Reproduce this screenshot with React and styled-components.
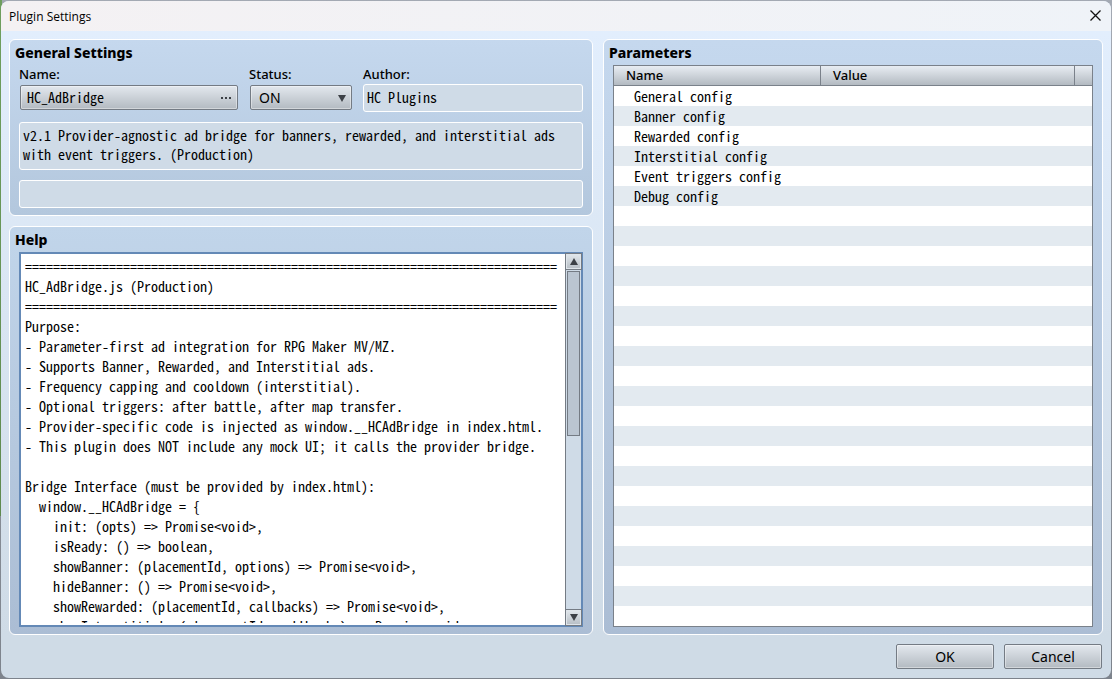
import React, { useRef } from "react";
import styled, { createGlobalStyle } from "styled-components";

const UI = `"Noto Sans", "Open Sans", sans-serif`;
const MONO = `"Noto Sans Mono CJK JP", "Liberation Mono", monospace`;

const GlobalStyle = createGlobalStyle`
  * {
    box-sizing: border-box;
  }

  body {
    margin: 0;
    background: linear-gradient(#a3a9b3, #7d838c);
    font-family: ${UI};
    font-size: 13px;
    color: #000;
  }
`;

const Desktop = styled.div`
  display: flex;
  min-height: 100vh;
  padding: 1px;
  background: linear-gradient(#6f9f5f, #5f8a50 76%, transparent 76%) left / 2px 100% no-repeat;
`;

const Window = styled.div`
  flex: 1;
  display: flex;
  flex-direction: column;
  border-radius: 8px;
  overflow: hidden;
  background: linear-gradient(#e3effe, #cfdbe6 94%);
`;

const TitleBar = styled.header`
  display: flex;
  align-items: center;
  justify-content: space-between;
  height: 30px;
  padding: 0 8px;
  background: linear-gradient(90deg, #f4f1f3, #eff3f8);
  font-family: "Open Sans", sans-serif;
  font-size: 12px;
`;

const CloseButton = styled.button`
  display: flex;
  padding: 0 2px 2px;
  border: none;
  background: none;
`;

const Body = styled.main`
  flex: 1;
  display: grid;
  grid-template-columns: 584fr 500fr;
  gap: 10px;
  padding: 8px 8px 9px;
`;

const Column = styled.div`
  display: flex;
  flex-direction: column;
  gap: 10px;
  min-width: 0;
`;

const Panel = styled.section`
  display: flex;
  flex-direction: column;
  flex: ${props => (props.$grow ? 1 : "none")};
  padding: 0 9px 7px;
  border: 1px solid #fff;
  border-radius: 6px;
  background: ${props => props.$fill};

  h2 {
    margin: 0 0 0 -4px;
    font-size: 14px;
    font-weight: 800;
    line-height: 25px;
  }
`;

const FieldRow = styled.div`
  display: grid;
  grid-template-columns: 220fr 104fr 220fr;
  gap: 10px;
  margin-bottom: 10px;
`;

const Field = styled.div`
  display: flex;
  flex-direction: column;

  label {
    font-size: 13px;
    font-weight: 500;
    line-height: 19px;
  }
`;

const Control = styled.div`
  display: flex;
  position: relative;
  height: 28px;
  padding: 1px;

  svg {
    position: absolute;
    right: 7px;
    top: 11px;
    pointer-events: none;
  }
`;

const raised = `
  border: 1px solid #747b84;
  border-radius: 2px;
  background: linear-gradient(#e3e8ee, #b3bac1);
  box-shadow: inset 0 0 0 1px rgba(255, 255, 255, 0.4);
  color: #000;
`;

const NameButton = styled.button`
  ${raised}
  flex: 1;
  height: 25px;
  padding: 0 6px 2px;
  text-align: left;
  font-family: ${MONO};
  font-size: 14px;
  line-height: 20px;
`;

const StatusSelect = styled.select`
  ${raised}
  appearance: none;
  flex: 1;
  height: 25px;
  padding: 0 8px;
  font-family: ${UI};
  font-size: 14px;
`;

const readonlyBox = `
  width: 100%;
  border: 1px solid #fff;
  border-radius: 3px;
  background: #cfdbe7;
  font-family: ${MONO};
  font-size: 14px;
  color: #000;
  outline: none;
`;

const TextBox = styled.input`
  ${readonlyBox}
  height: 28px;
  padding: 0 3px 2px;
`;

const Description = styled.textarea`
  ${readonlyBox}
  display: block;
  height: 48px;
  margin-bottom: 10px;
  padding: 3px;
  line-height: 19px;
  resize: none;
  overflow: hidden;
`;

const HelpBox = styled.div`
  flex: 1;
  display: flex;
  min-height: 0;
  border: 2px solid #6489b6;
  background: #fff;
`;

const HelpText = styled.pre`
  flex: 1 1 0;
  height: 0;
  min-height: 100%;
  min-width: 0;
  margin: 0;
  border: solid #fff;
  border-width: 2px 0 2px 4px;
  overflow: hidden;
  font-family: ${MONO};
  font-size: 14px;
  line-height: 20px;
`;

const ScrollBar = styled.div`
  display: flex;
  flex-direction: column;
  width: 16px;
  border-left: 1px solid #747b84;
  background: #cfdbe7;
`;

const ScrollButton = styled.button`
  display: flex;
  align-items: center;
  justify-content: center;
  height: 15px;
  padding: 0;
  border: 1px solid #dfe5ea;
  background: linear-gradient(#dfe5ea, #b9c0c7);
  box-shadow: 0 0 0 1px #747b84;
`;

const Track = styled.div`
  flex: 1;
  padding: 2px 1px;
`;

const Thumb = styled.div`
  height: 49%;
  border: 1px solid #747b84;
  background: #bac5d1;
`;

const TableFrame = styled.div`
  flex: 1;
  border: 1px solid #7a818a;
  background: repeating-linear-gradient(#e3eaf0 0 20px, #fff 20px 40px);
`;

const ParamTable = styled.table`
  width: 100%;
  border-spacing: 0;
  table-layout: fixed;

  th {
    height: 20px;
    padding: 0 12px;
    border-bottom: 1px solid #7a818a;
    border-right: 1px solid #7a818a;
    background: linear-gradient(#e8edf3, #b3bac1);
    text-align: left;
    font-size: 13px;
    font-weight: 500;
    line-height: 19px;
  }

  th:last-child {
    border-right: none;
  }

  td {
    height: 20px;
    padding: 0 20px;
    font-family: ${MONO};
    font-size: 14px;
    line-height: 20px;
  }

  tbody tr:nth-child(odd) td {
    background: #fff;
  }
`;

const Footer = styled.footer`
  display: flex;
  justify-content: flex-end;
  gap: 10px;
  padding: 0 9px 9px;
`;

const DialogButton = styled.button`
  ${raised}
  width: 98px;
  height: 25px;
  padding: 0;
  font-family: ${UI};
  font-size: 14px;
`;

const Arrow = ({ up }) => (
  <svg width="8" height="7" viewBox="0 0 8 7" aria-hidden="true">
    <path d={up ? "M0 7 L4 0 L8 7 Z" : "M0 0 L4 7 L8 0 Z"} fill="#3c4046" />
  </svg>
);

const RULE = "=".repeat(76);

const HELP = `${RULE}
HC_AdBridge.js (Production)
${RULE}
Purpose:
- Parameter-first ad integration for RPG Maker MV/MZ.
- Supports Banner, Rewarded, and Interstitial ads.
- Frequency capping and cooldown (interstitial).
- Optional triggers: after battle, after map transfer.
- Provider-specific code is injected as window.__HCAdBridge in index.html.
- This plugin does NOT include any mock UI; it calls the provider bridge.

Bridge Interface (must be provided by index.html):
  window.__HCAdBridge = {
    init: (opts) => Promise<void>,
    isReady: () => boolean,
    showBanner: (placementId, options) => Promise<void>,
    hideBanner: () => Promise<void>,
    showRewarded: (placementId, callbacks) => Promise<void>,
    showInterstitial: (placementId, callbacks) => Promise<void>,`;

const PARAMS = [
  "General config",
  "Banner config",
  "Rewarded config",
  "Interstitial config",
  "Event triggers config",
  "Debug config"
];

const App = () => {
  const help = useRef(null);
  const scroll = top => help.current.scrollBy({ top });

  return (
    <Desktop>
      <GlobalStyle />
      <Window>
        <TitleBar>
          <span>Plugin Settings</span>
          <CloseButton aria-label="Close">
            <svg width="11" height="11" viewBox="0 0 11 11">
              <path
                d="M0.5 0.5 L10.5 10.5 M10.5 0.5 L0.5 10.5"
                stroke="#111"
                strokeWidth="1.3"
              />
            </svg>
          </CloseButton>
        </TitleBar>
        <Body>
          <Column>
            <Panel $fill="linear-gradient(#c5d8ee, #b3c7dd)">
              <h2>General Settings</h2>
              <FieldRow>
                <Field>
                  <label htmlFor="name">Name:</label>
                  <Control>
                    <NameButton id="name">HC_AdBridge</NameButton>
                    <svg width="12" height="6" viewBox="0 0 12 6">
                      <path d="M1 2h2v2h-2z M5 2h2v2h-2z M9 2h2v2h-2z" fill="#3c4046" />
                    </svg>
                  </Control>
                </Field>
                <Field>
                  <label htmlFor="status">Status:</label>
                  <Control>
                    <StatusSelect id="status" defaultValue="ON">
                      <option>ON</option>
                      <option>OFF</option>
                    </StatusSelect>
                    <Arrow />
                  </Control>
                </Field>
                <Field>
                  <label htmlFor="author">Author:</label>
                  <TextBox id="author" readOnly value="HC Plugins" />
                </Field>
              </FieldRow>
              <Description
                aria-label="Description"
                readOnly
                value="v2.1 Provider-agnostic ad bridge for banners, rewarded, and interstitial ads with event triggers. (Production)"
              />
              <TextBox aria-label="Notes" readOnly value="" />
            </Panel>
            <Panel $grow $fill="linear-gradient(#c1d5ea, #abbdd4)">
              <h2>Help</h2>
              <HelpBox>
                <HelpText ref={help}>{HELP}</HelpText>
                <ScrollBar>
                  <ScrollButton aria-label="Scroll up" onClick={() => scroll(-20)}>
                    <Arrow up />
                  </ScrollButton>
                  <Track>
                    <Thumb />
                  </Track>
                  <ScrollButton aria-label="Scroll down" onClick={() => scroll(20)}>
                    <Arrow />
                  </ScrollButton>
                </ScrollBar>
              </HelpBox>
            </Panel>
          </Column>
          <Panel $grow $fill="linear-gradient(#c5d8ee, #abbdd4)">
            <h2>Parameters</h2>
            <TableFrame>
              <ParamTable>
                <colgroup>
                  <col width="43.3%" />
                  <col />
                  <col width="17" />
                </colgroup>
                <thead>
                  <tr>
                    <th>Name</th>
                    <th>Value</th>
                    <th aria-label="Scroll column" />
                  </tr>
                </thead>
                <tbody>
                  {PARAMS.map(name => (
                    <tr key={name}>
                      <td>{name}</td>
                      <td />
                      <td />
                    </tr>
                  ))}
                </tbody>
              </ParamTable>
            </TableFrame>
          </Panel>
        </Body>
        <Footer>
          <DialogButton>OK</DialogButton>
          <DialogButton>Cancel</DialogButton>
        </Footer>
      </Window>
    </Desktop>
  );
};

export default App;
